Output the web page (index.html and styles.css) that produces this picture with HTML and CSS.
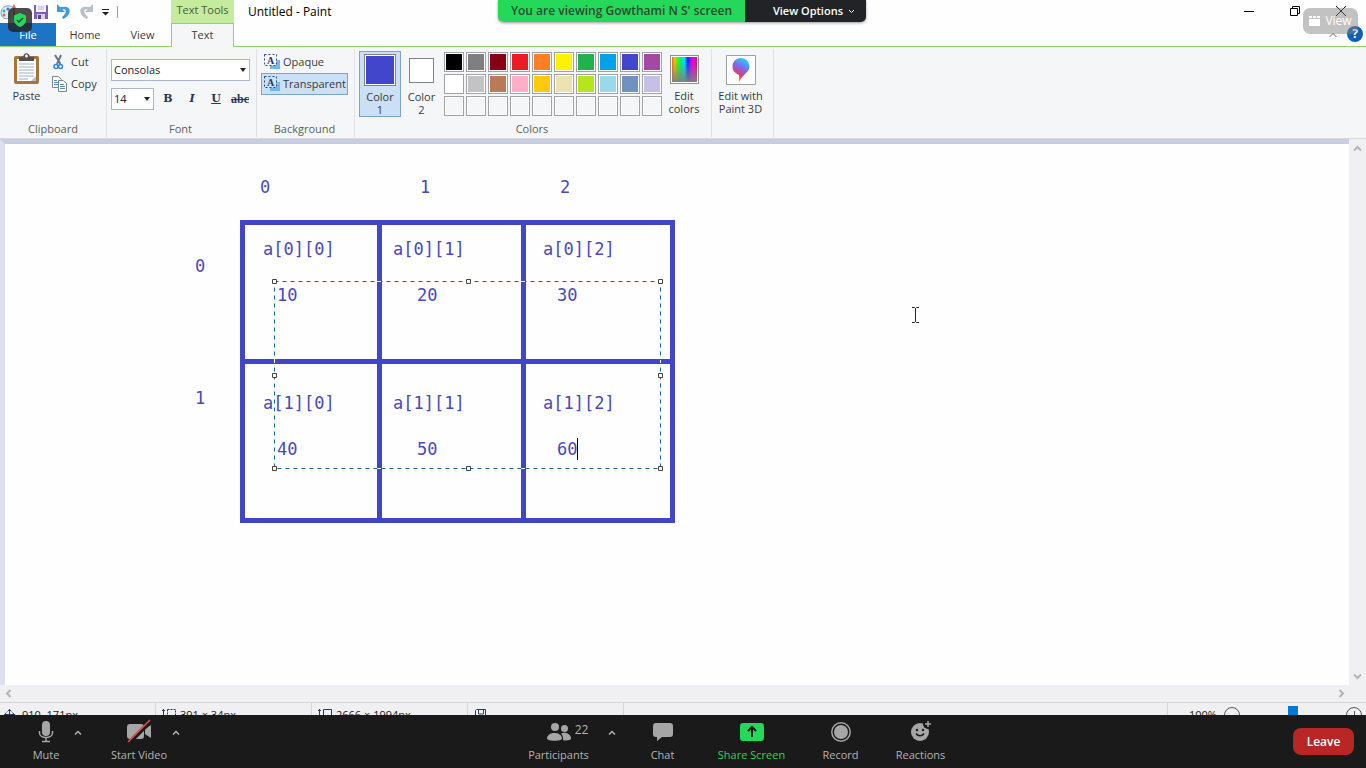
FILE: index.html
```html
<!DOCTYPE html>
<html lang="en">
<head>
<meta charset="utf-8">
<title>Untitled - Paint</title>
<link rel="stylesheet" href="styles.css">
</head>
<body>
<div class="app">
  <header class="header">
    <div class="quick">
      <svg class="logo" width="17" height="18" viewBox="0 0 17 18"><path d="M1 10C1 5 5 2 10 3s4 5 1 6 1 4-2 6-8 0-8-5z" fill="#dcebf2" stroke="#7ba6bd"/><circle cx="4" cy="8" r="1.5" fill="#3b9"/><circle cx="8" cy="6" r="1.5" fill="#47c"/><circle cx="4" cy="12" r="1.5" fill="#d64"/><path d="M14 4v12" stroke="#c98a4d" stroke-width="2"/><path d="M12 5l2-4 2 4z" fill="#e06a4c"/></svg>
      <button class="qbtn" aria-label="Save"><svg width="14" height="14" viewBox="0 0 14 14"><path d="M0 0h13l1 1v13H0z" fill="#7e5db5"/><path d="M2 0h10v7H2z" fill="#f4f0fa"/><path d="M4 2h6M4 4h6" stroke="#bcaedb"/><path d="M3 9h8v5H3z" fill="#d9cfea"/><path d="M4 10h3v4H4z" fill="#604291"/></svg></button>
      <button class="qbtn" aria-label="Undo"><svg width="15" height="15" viewBox="0 0 15 15"><path d="M1 0v8h8L6.500 5.500C10 4 12 8 6 13l1 2c10-5 8-14-.5-12L4 3z" fill="#3e9be0"/></svg></button>
      <button class="qbtn" aria-label="Redo"><svg width="15" height="15" viewBox="0 0 15 15"><path d="M14 0v8H6l2.500-2.500C5 4 3 8 9 13l-1 2C-2 10 0 1 8.500 3L11 3z" fill="#b9c0c7"/></svg></button>
      <button class="qbtn" aria-label="Customize"><svg width="7" height="8" viewBox="0 0 7 8"><path d="M0 1.500h7" stroke="#222"/><path d="M0 4h7L3.500 7.500z" fill="#222"/></svg></button>
      <i class="qsep"></i>
    </div>
    <div class="context">Text Tools</div>
    <div class="titlebar">
      <h1>Untitled - Paint</h1>
      <div class="winbtns">
        <button aria-label="Minimize"><svg width="12" height="12" viewBox="0 0 12 12"><path d="M1 6.500h10" stroke="#000"/></svg></button>
        <button aria-label="Restore"><svg width="12" height="12" viewBox="0 0 12 12" fill="none" stroke="#000"><path d="M1.500 3.500h7v7h-7zM3.500 3V1.500h7v7H9"/></svg></button>
        <button aria-label="Close"><svg width="12" height="12" viewBox="0 0 12 12"><path d="M1 1l10 10M11 1L1 11" stroke="#000"/></svg></button>
      </div>
    </div>
    <button class="tab file">File</button>
    <button class="tab">Home</button>
    <button class="tab">View</button>
    <button class="tab active">Text</button>
    <div class="tabfill">
      <svg width="10" height="6" viewBox="0 0 10 6" fill="none"><path d="M1.500 5L5 1.500 8.500 5" stroke="#666"/></svg>
      <button class="help" aria-label="Help">?</button>
    </div>
  </header>

  <section class="ribbon">
    <div class="group g-clip">
      <div class="body">
        <button class="big paste">
          <svg width="26" height="32" viewBox="0 0 26 32"><rect x="0" y="3" width="25" height="28" rx="2" fill="#a8733c"/><path d="M3 6h19v22H3z" fill="#fff"/><path d="M5 11h15M5 14h15M5 17h15M5 20h15M5 23h15M5 26h9" stroke="#9fb0c4"/><path d="M17 28l5-5v5z" fill="#b9c2cc"/><path d="M5 8V4h4c1-5 6-5 7 0h4v4z" fill="#56504c"/><circle cx="12.500" cy="3" r="1.500" fill="#f5f6f7"/></svg>
          <span>Paste</span>
        </button>
        <div class="stack">
          <button class="small"><svg width="18" height="16" viewBox="0 0 18 16" fill="none"><path d="M4 1l5.500 9M10 1L6 10" stroke="#68788a" stroke-width="2"/><circle cx="5" cy="12.500" r="2" stroke="#2f86d1" stroke-width="1.500"/><circle cx="9.500" cy="12.500" r="2" stroke="#2f86d1" stroke-width="1.500"/></svg>Cut</button>
          <button class="small"><svg width="18" height="16" viewBox="0 0 18 16" fill="#fff" stroke="#7c8a98"><path d="M1.500.5h6l3 3v8h-9z"/><path d="M3 4.500h3M3 6.500h4M3 8.500h4" stroke="#5b8cc0"/><path d="M7.500 4.500h5l3 3v8h-8z"/><path d="M9 8.500h4M9 10.500h5M9 12.500h5" stroke="#5b8cc0"/></svg>Copy</button>
        </div>
      </div>
      <h2>Clipboard</h2>
    </div>

    <div class="group g-font">
      <div class="body fontbody">
        <div class="combo"><select aria-label="Font family"><option>Consolas</option></select></div>
        <div class="fontrow">
          <div class="combo size"><select aria-label="Font size"><option>14</option></select></div>
          <button class="fmt bold">B</button>
          <button class="fmt ital">I</button>
          <button class="fmt under">U</button>
          <button class="fmt strike">abc</button>
        </div>
      </div>
      <h2>Font</h2>
    </div>

    <div class="group g-back">
      <div class="body stack backs">
        <button class="small bg"><svg width="16" height="16" viewBox="0 0 16 16"><path d="M8 6h8v9H6v-4z" fill="#72b5f2"/><path d="M.5.5h12v11H.5z" fill="#f5f9ff" stroke="#294b78" stroke-dasharray="2 2"/><text x="3" y="10" class="glyph">A</text></svg>Opaque</button>
        <button class="small bg on"><svg width="16" height="16" viewBox="0 0 16 16"><path d="M8 6h8v9H6v-4z" fill="#72b5f2"/><path d="M.5.5h12v11H.5z" fill="#c9e0f7" stroke="#294b78" stroke-dasharray="2 2"/><text x="3" y="10" class="glyph">A</text></svg>Transparent</button>
      </div>
      <h2>Background</h2>
    </div>

    <div class="group g-colors">
      <div class="body colorbody">
        <button class="cbtn on"><i class="chip c-indigo"></i><span>Color<br>1</span></button>
        <button class="cbtn second"><i class="chip c-white"></i><span>Color<br>2</span></button>
        <div class="palette">
          <button aria-label="Black" class="c-black"></button><button aria-label="Gray" class="c-gray"></button><button aria-label="Dark red" class="c-maroon"></button><button aria-label="Red" class="c-red"></button><button aria-label="Orange" class="c-orange"></button><button aria-label="Yellow" class="c-yellow"></button><button aria-label="Green" class="c-green"></button><button aria-label="Turquoise" class="c-blue"></button><button aria-label="Indigo" class="c-indigo"></button><button aria-label="Purple" class="c-purple"></button>
          <button aria-label="White" class="c-white"></button><button aria-label="Light gray" class="c-silver"></button><button aria-label="Brown" class="c-brown"></button><button aria-label="Rose" class="c-rose"></button><button aria-label="Gold" class="c-gold"></button><button aria-label="Light yellow" class="c-cream"></button><button aria-label="Lime" class="c-lime"></button><button aria-label="Light turquoise" class="c-aqua"></button><button aria-label="Blue gray" class="c-slate"></button><button aria-label="Lavender" class="c-lavender"></button>
          <button aria-label="Custom 1"></button><button aria-label="Custom 2"></button><button aria-label="Custom 3"></button><button aria-label="Custom 4"></button><button aria-label="Custom 5"></button><button aria-label="Custom 6"></button><button aria-label="Custom 7"></button><button aria-label="Custom 8"></button><button aria-label="Custom 9"></button><button aria-label="Custom 10"></button>
        </div>
        <button class="big edit"><i class="rainbow"></i><span>Edit<br>colors</span></button>
      </div>
      <h2>Colors</h2>
    </div>

    <div class="group g-3d">
      <div class="body">
        <button class="big edit">
          <svg class="p3d" width="30" height="30" viewBox="0 0 30 30"><defs><linearGradient id="drop" x1=".7" y1="0" x2=".3" y2="1"><stop offset="0" stop-color="#25d5f5"/><stop offset=".4" stop-color="#7a6bf0"/><stop offset=".7" stop-color="#e03a78"/><stop offset="1" stop-color="#fb9a1e"/></linearGradient></defs><path d="M.5.5h29v29H.5z" fill="#fff" stroke="#a0a0a0"/><path d="M15 3c5 0 8.500 4 8.500 8.500 0 6-6.500 7-10.500 15.500-.5-3 .5-5 0-7-4-2-6.500-4-6.500-8.500C6.500 7 10 3 15 3z" fill="url(#drop)"/></svg>
          <span>Edit with<br>Paint 3D</span>
        </button>
      </div>
    </div>
  </section>

  <main class="work">
    <div class="canvas">
      <svg class="drawing" width="700" height="400" viewBox="5 144 700 400">
        <g fill="none" stroke="#4146c8" stroke-width="5"><path d="M242.500 222.500h430v298h-430zM379.500 222v298M523.500 222v298M242 361.500h430"/></g>
        <g class="mono">
          <text x="260" y="193">0</text><text x="420" y="193">1</text><text x="560" y="193">2</text>
          <text x="195" y="272">0</text><text x="195" y="404">1</text>
          <text x="263" y="255">a[0][0]</text><text x="393" y="255">a[0][1]</text><text x="543" y="255">a[0][2]</text>
          <text x="277" y="301">10</text><text x="417" y="301">20</text><text x="557" y="301">30</text>
          <text x="263" y="409">a[1][0]</text><text x="393" y="409">a[1][1]</text><text x="543" y="409">a[1][2]</text>
          <text x="277" y="455">40</text><text x="417" y="455">50</text><text x="557" y="455">60</text>
        </g>
        <path d="M274.500 281.500h386v187h-386z" fill="none" stroke="#1c64a0" stroke-dasharray="4 4"/>
        <path d="M377 281.500h4M521 281.500h4M377 468.500h4M521 468.500h4M274.500 359v4M660.500 360v3" stroke="#fff"/>
        <g fill="#fff" stroke="#444"><path d="M272.500 279.500h4v4h-4zM466.500 279.500h4v4h-4zM658.500 279.500h4v4h-4zM272.500 373.500h4v4h-4zM658.500 373.500h4v4h-4zM272.500 466.500h4v4h-4zM466.500 466.500h4v4h-4zM658.500 466.500h4v4h-4z"/></g>
        <path d="M577.500 438v22" stroke="#000"/>
      </svg>
      <svg class="ibeam" width="7" height="16" viewBox="0 0 7 16" fill="none" stroke="#222"><path d="M0 .5h2.500l1 1 1-1H7M3.500 1v14M0 15.500h2.500l1-1 1 1H7"/></svg>
    </div>
    <div class="vscroll">
      <svg width="9" height="7" viewBox="0 0 9 7" fill="none"><path d="M1 5.500L4.500 2 8 5.500" stroke="#b4b4b6" stroke-width="2"/></svg>
      <svg width="9" height="7" viewBox="0 0 9 7" fill="none"><path d="M1 1.500L4.500 5 8 1.500" stroke="#b4b4b6" stroke-width="2"/></svg>
    </div>
  </main>
  <div class="hscroll">
    <svg width="7" height="9" viewBox="0 0 7 9" fill="none"><path d="M5.500 1L2 4.500 5.500 8" stroke="#b4b4b6" stroke-width="2"/></svg>
    <svg width="7" height="9" viewBox="0 0 7 9" fill="none"><path d="M1.500 1L5 4.500 1.500 8" stroke="#b4b4b6" stroke-width="2"/></svg>
  </div>
  <footer class="status">
    <div class="cell pos"><svg width="11" height="11" viewBox="0 0 11 11" fill="none" stroke="#2b3a5a"><path d="M5.500 0v11M0 5.500h11M3.500 2.500l2-2 2 2M2.500 3.500l-2 2 2 2M8.500 3.500l2 2-2 2"/></svg>910, 171px</div>
    <div class="cell"><svg width="14" height="12" viewBox="0 0 14 12" fill="none" stroke="#2b3a5a"><path d="M1.500 0v11M0 1.500h3"/><path d="M5.500.5h8v8h-8z" stroke-dasharray="2 1"/></svg>391 × 34px</div>
    <div class="cell"><svg width="14" height="12" viewBox="0 0 14 12" fill="none" stroke="#2b3a5a"><path d="M1.500 0v11M0 1.500h3M5.500.5h8v8h-8z"/></svg>2666 × 1994px</div>
    <div class="cell"><svg width="11" height="12" viewBox="0 0 11 12" fill="#fff" stroke="#2b3a5a"><path d="M.5 1.500l1-1h9v10H.5zM3.500 1v4h5V1"/></svg></div>
    <div class="cell zoom">
      <span>100%</span>
      <button aria-label="Zoom out"><svg width="16" height="16" viewBox="0 0 16 16" fill="none" stroke="#555"><circle cx="8" cy="8" r="7.500"/><path d="M4 8.500h8"/></svg></button>
      <input type="range" aria-label="Zoom" min="0" max="100" value="50">
      <button aria-label="Zoom in"><svg width="16" height="16" viewBox="0 0 16 16" fill="none" stroke="#555"><circle cx="8" cy="8" r="7.500"/><path d="M4 8.500h8M8.500 4v8"/></svg></button>
    </div>
  </footer>

  <div class="shield"><svg width="12" height="14" viewBox="0 0 12 14"><path d="M6 0l6 2.500V7c0 3-2.500 5.500-6 7-3.500-1.500-6-4-6-7V2.500z" fill="#24d959"/><path d="M3 7l2 2 4-4" fill="none" stroke="#21442c" stroke-width="1.500"/></svg></div>
  <div class="share">
    <div class="viewing">You are viewing Gowthami N S' screen</div>
    <button class="options">View Options<svg width="7" height="5" viewBox="0 0 7 5" fill="none"><path d="M1 1l2.500 2.500L6 1" stroke="#fff"/></svg></button>
  </div>
  <button class="viewpill"><svg width="11" height="10" viewBox="0 0 11 10" fill="#fff"><path d="M0 0h3v2H0zM4 0h3v2H4zM8 0h3v2H8zM0 3h11v7H0z"/></svg>View</button>

  <nav class="meeting">
    <button class="tool mute"><svg width="16" height="24" viewBox="0 0 16 24" fill="none" stroke="#a6a6a6"><rect x="4" y="2" width="8" height="15" rx="4" fill="#a6a6a6" stroke="none"/><path d="M1.500 12v2c0 6 13 6 13 0v-2M8 18v4M4 22.500h8" stroke-width="1.500"/></svg>Mute</button>
    <button class="caret" aria-label="Audio options"><svg width="8" height="5" viewBox="0 0 8 5" fill="none"><path d="M1 4.500l3-3 3 3" stroke="#b0b0b0" stroke-width="1.500"/></svg></button>
    <button class="tool video"><svg width="26" height="24" viewBox="0 0 26 24"><rect x="1" y="5" width="17" height="15" rx="3" fill="#a6a6a6"/><path d="M19 10l6-4v13l-6-4z" fill="#a6a6a6"/><path d="M3 24L25 2" stroke="#1a1a1a" stroke-width="4"/><path d="M2 23L24 1" stroke="#e8534f" stroke-width="1.500"/></svg>Start Video</button>
    <button class="caret" aria-label="Video options"><svg width="8" height="5" viewBox="0 0 8 5" fill="none"><path d="M1 4.500l3-3 3 3" stroke="#b0b0b0" stroke-width="1.500"/></svg></button>
    <button class="tool people"><span class="icoline"><svg width="24" height="24" viewBox="0 0 24 24" fill="#a6a6a6"><circle cx="8" cy="8" r="4"/><path d="M0 19.500C0 12 15 12 15 19.500c0 3-15 3-15 0z"/><circle cx="17.500" cy="9.500" r="3.500"/><path d="M14 14.500c5-2 10 1 10 5 0 2-5 2.200-8 1.700.5-2.200-.3-5-2-6.700z"/></svg><b>22</b></span>Participants</button>
    <button class="caret" aria-label="Participant options"><svg width="8" height="5" viewBox="0 0 8 5" fill="none"><path d="M1 4.500l3-3 3 3" stroke="#b0b0b0" stroke-width="1.500"/></svg></button>
    <button class="tool chat"><svg width="20" height="24" viewBox="0 0 20 24"><path d="M3 4h14c2 0 3 1 3 3v8c0 2-1 3-3 3H9l-5 4v-4H3c-2 0-3-1-3-3V7c0-2 1-3 3-3z" fill="#a6a6a6"/></svg>Chat</button>
    <button class="tool screen"><svg width="24" height="24" viewBox="0 0 24 24"><rect y="4" width="24" height="18" rx="3" fill="#24d959"/><path d="M12 18v-9M8 12l4-4 4 4" fill="none" stroke="#1a1a1a" stroke-width="2"/></svg>Share Screen</button>
    <button class="tool record"><svg width="20" height="24" viewBox="0 0 20 24" fill="none" stroke="#a6a6a6"><circle cx="10" cy="13" r="9.200" stroke-width="1.500"/><circle cx="10" cy="13" r="7" fill="#a6a6a6" stroke="none"/></svg>Record</button>
    <button class="tool react"><svg width="22" height="24" viewBox="0 0 22 24"><circle cx="10" cy="13" r="9" fill="#a6a6a6"/><circle cx="18" cy="5" r="5" fill="#1a1a1a"/><path d="M18 2v6M15 5h6" stroke="#a6a6a6" stroke-width="1.500"/><circle cx="7" cy="11" r="1.200" fill="#1a1a1a"/><circle cx="13" cy="11" r="1.200" fill="#1a1a1a"/><path d="M6 14.500c2 3 6 3 8 0" fill="none" stroke="#1a1a1a" stroke-width="1.500"/></svg>Reactions</button>
    <button class="leave">Leave</button>
  </nav>
</div>
</body>
</html>
```
FILE: styles.css
```css
* { box-sizing: border-box; }
body {
  margin: 0;
  font: 11px/14px "Open Sans", "Noto Sans", sans-serif;
  color: #3b3b3b;
}
button {
  font: inherit;
  color: inherit;
  background: none;
  border: 0;
  padding: 0;
}
svg { display: block; flex: none; }
h1, h2 { margin: 0; font: inherit; }
.app {
  position: relative;
  display: flex;
  flex-direction: column;
  height: 100vh;
  overflow: hidden;
}

/* Title bar and tabs */
.header {
  display: grid;
  grid-template-columns: 56px 58px 57px 63px 1fr;
  grid-template-rows: 23px 24px;
  background: #fefefe;
}
.quick {
  grid-column: 1 / 4;
  display: flex;
  align-items: center;
  gap: 8px;
}
.quick .logo { margin-right: 9px; }
.qsep { width: 1px; height: 12px; background: #999; }
.context {
  background: #c4ec9c;
  text-align: center;
  line-height: 20px;
  color: #44603a;
}
.titlebar {
  display: flex;
  justify-content: space-between;
  align-items: center;
  padding: 0 19px 2px 14px;
  color: #000;
}
.titlebar h1 { font-size: 12px; padding-top: 2px; }
.winbtns { display: flex; gap: 34px; }
.tab { border-bottom: 1px solid #93d36c; }
.tab.file {
  background: #1b75c4;
  color: #fff;
}
.tab.active {
  background: #f5f6f7;
  border: 1px solid #93d36c;
  border-bottom: 0;
  padding-bottom: 2px;
}
.tabfill {
  display: flex;
  justify-content: flex-end;
  align-items: center;
  gap: 9px;
  border-bottom: 1px solid #93d36c;
}
.help {
  width: 16px;
  height: 16px;
  margin: 0 3px 2px 0;
  border-radius: 50%;
  background: #0d62b5;
  color: #fff;
  font-weight: 700;
  font-size: 12px;
}

/* Ribbon */
.ribbon {
  display: flex;
  padding: 2px 0 1px;
  background: #f5f6f7;
  border-bottom: 1px solid #d5d8de;
  height: 92px;
}
.group {
  display: flex;
  flex-direction: column;
  border-right: 1px solid #e0e2e6;
}
.group h2 {
  text-align: center;
  color: #5c5f66;
  line-height: 16px;
}
.body { flex: 1; display: flex; align-items: flex-start; }
.g-clip { width: 107px; }
.g-font { width: 150px; }
.g-back { width: 98px; }
.g-back h2, .g-font h2, .g-colors h2 { padding-right: 2px; }
.g-colors { width: 357px; }
.g-3d { width: 62px; }
.big {
  display: flex;
  flex-direction: column;
  align-items: center;
  line-height: 13px;
}
.paste { width: 51px; padding: 4px 0 0 2px; gap: 4px; }
.stack { display: flex; flex-direction: column; }
.small {
  display: flex;
  align-items: center;
  gap: 2px;
  height: 22px;
}
.g-clip .stack { padding-top: 2px; }
.fontbody { flex-direction: column; gap: 7px; padding: 10px 0 0 4px; }
.combo { position: relative; width: 139px; height: 22px; }
.combo::after {
  content: "";
  position: absolute;
  right: 4px;
  top: 9px;
  border: 3px solid transparent;
  border-top: 4px solid #222;
  border-bottom: 0;
  pointer-events: none;
}
.combo select {
  appearance: none;
  width: 100%;
  height: 100%;
  padding: 0 2px;
  border: 1px solid #a9b6cc;
  border-radius: 0;
  background: #fff;
  color: #222;
  font: inherit;
}
.combo.size { width: 43px; }
.fontrow { display: flex; align-items: center; gap: 4px; }
.fmt {
  width: 20px;
  height: 22px;
  color: #27365a;
  font: 700 13px/20px "DejaVu Serif", "Liberation Serif", serif;
}
.fmt.bold, .fmt.ital, .fmt.under { font-size: 11px; }
.fmt.ital { font-style: italic; }
.fmt.under { text-decoration: underline; }
.fmt.strike { font: 700 12px/20px "Liberation Serif", serif; text-decoration: line-through; }
.backs { padding: 2px 0 0 4px; align-items: stretch; }
.bg { width: 87px; padding-left: 2px; gap: 3px; border: 1px solid transparent; }
.on { background: #cbdff5; border-color: #7aa3cf; }
.glyph { font: 700 10px "Liberation Serif", serif; fill: #1f355c; }
.colorbody { padding: 2px 0 0 4px; }
.cbtn {
  display: flex;
  flex-direction: column;
  align-items: center;
  width: 42px;
  height: 66px;
  padding-top: 2px;
  gap: 4px;
  line-height: 13px;
}
.cbtn.on { border: 1px solid #7aa3cf; }
.chip {
  width: 32px;
  height: 32px;
  border: 1px solid #808488;
  box-shadow: inset 0 0 0 1px #fff;
}
.cbtn.second { padding-right: 1px; }
.cbtn.second .chip { width: 25px; height: 25px; margin: 5px 0 3px; }
.palette {
  display: grid;
  grid-template-columns: repeat(10, 20px);
  grid-auto-rows: 20px;
  gap: 2px;
  padding: 1px 1px 0;
}
.palette button {
  border: 1px solid #a2a2a6;
  box-shadow: inset 0 0 0 1px #fff;
}
.edit { width: 42px; padding-top: 4px; gap: 5px; }
.g-3d .edit { width: 57px; padding-top: 6px; gap: 4px; }
.rainbow {
  width: 29px;
  height: 29px;
  border: 1px solid #909090;
  box-shadow: inset 0 0 0 1px #fff;
  background: linear-gradient(transparent 20%, #808080), linear-gradient(90deg, #f33, #fb0, #3f0, #0e8, #0df, #12f, #c0f, #f0a, #f03);
}
.c-black { background: #000; }
.c-gray { background: #7f7f7f; }
.c-maroon { background: #880015; }
.c-red { background: #ed1c24; }
.c-orange { background: #ff7f27; }
.c-yellow { background: #fff200; }
.c-green { background: #22b14c; }
.c-blue { background: #00a2e8; }
.c-indigo { background: #4146cb; }
.c-purple { background: #a349a4; }
.c-white { background: #fff; }
.c-silver { background: #c3c3c3; }
.c-brown { background: #b97a57; }
.c-rose { background: #ffaec9; }
.c-gold { background: #ffc90e; }
.c-cream { background: #ebe3b0; }
.c-lime { background: #b5e61d; }
.c-aqua { background: #99d9ea; }
.c-slate { background: #7092be; }
.c-lavender { background: #c8bfe7; }

/* Drawing area */
.work { flex: 1; display: flex; min-height: 0; }
.canvas {
  position: relative;
  flex: 1;
  border-top: 5px solid #c8cee0;
  border-left: 5px solid #dce1f0;
  background: #fefefe;
  overflow: hidden;
}
.mono { font: 17px "DejaVu Sans Mono", monospace; fill: #4a48bd; }
.ibeam { position: absolute; left: 907px; top: 163px; }
.vscroll {
  width: 17px;
  display: flex;
  flex-direction: column;
  align-items: center;
  justify-content: space-between;
  padding: 6px 0 5px;
  background: #f0eff1;
}
.hscroll {
  display: flex;
  align-items: center;
  justify-content: space-between;
  height: 17px;
  padding: 0 21px 0 5px;
  background: #f0eff1;
}
.status {
  display: flex;
  height: 66px;
  border-top: 1px solid #d5d4d7;
  background: #f0eff1;
  color: #222;
}
.cell {
  display: flex;
  align-items: flex-start;
  gap: 4px;
  width: 156px;
  height: 22px;
  padding: 5px 6px 0;
  border-right: 1px solid #d5d4d7;
}
.cell svg { margin-top: 1px; }
.pos { padding-left: 4px; gap: 7px; }
.cell:nth-child(4) { padding-left: 7px; }
.zoom {
  width: 199px;
  margin-left: auto;
  padding: 3px 5px 0 21px;
  gap: 7px;
  border: 0;
  border-left: 1px solid #d5d4d7;
}
.zoom span { padding-top: 2px; }
.zoom input {
  appearance: none;
  width: 84px;
  height: 18px;
  margin: 0 4px;
  background: linear-gradient(#cfcfd1, #cfcfd1) center 9px / 100% 1px no-repeat;
}
.zoom input::-webkit-slider-thumb {
  appearance: none;
  width: 10px;
  height: 18px;
  background: #0078d7;
}

/* Meeting overlays */
.shield {
  position: absolute;
  left: 8px;
  top: 8px;
  display: grid;
  place-items: center;
  width: 24px;
  height: 24px;
  border-radius: 5px;
  background: rgba(35, 35, 35, .82);
}
.share {
  position: absolute;
  left: 50%;
  top: 0;
  transform: translateX(-50%);
  display: flex;
  height: 22px;
  margin-left: -1px;
  border-radius: 0 0 5px 5px;
  overflow: hidden;
  font-size: 12px;
  font-weight: 600;
  line-height: 22px;
  box-shadow: 0 1px 3px rgba(0, 0, 0, .4);
  white-space: nowrap;
}
.viewing { width: 247px; text-align: center; background: #24d959; color: #2b4934; }
.options {
  display: flex;
  align-items: center;
  justify-content: flex-end;
  gap: 5px;
  width: 121px;
  padding-right: 11px;
  background: #222326;
  color: #fff;
  font-size: 11px;
}
.viewpill {
  position: absolute;
  right: 8px;
  top: 8px;
  display: flex;
  align-items: center;
  justify-content: center;
  gap: 5px;
  width: 55px;
  height: 26px;
  border-radius: 7px;
  background: rgba(130, 130, 132, .48);
  color: #fff;
  font-size: 12px;
}
.meeting {
  position: absolute;
  left: 0;
  right: 0;
  bottom: 0;
  display: flex;
  height: 53px;
  background: #1a1a1a;
  color: #b4b4b4;
}
.tool {
  display: flex;
  flex-direction: column;
  align-items: center;
  gap: 5px;
  padding-top: 4px;
  white-space: nowrap;
}
.mute { width: 40px; margin-left: 26px; }
.caret { width: 22px; height: 34px; display: grid; place-items: center; }
.mute + .caret { margin-left: 1px; }
.video { width: 60px; margin-left: 20px; }
.video + .caret { width: 14px; margin-right: auto; }
.icoline { display: flex; gap: 4px; margin-left: 18px; }
.icoline b { font-weight: 400; font-size: 12px; line-height: 22px; }
.people { width: 76px; }
.people + .caret { width: 30px; }
.chat { width: 40px; margin-left: 16px; }
.screen { width: 76px; margin-left: 31px; color: #24d959; }
.record { width: 50px; margin-left: 26px; }
.react { width: 60px; margin-left: 25px; margin-right: auto; }
.leave {
  align-self: center;
  width: 61px;
  height: 27px;
  margin: 0 12px 0 5px;
  border-radius: 8px;
  background: #b92626;
  color: #fff;
  font-size: 12px;
  font-weight: 600;
}
```
